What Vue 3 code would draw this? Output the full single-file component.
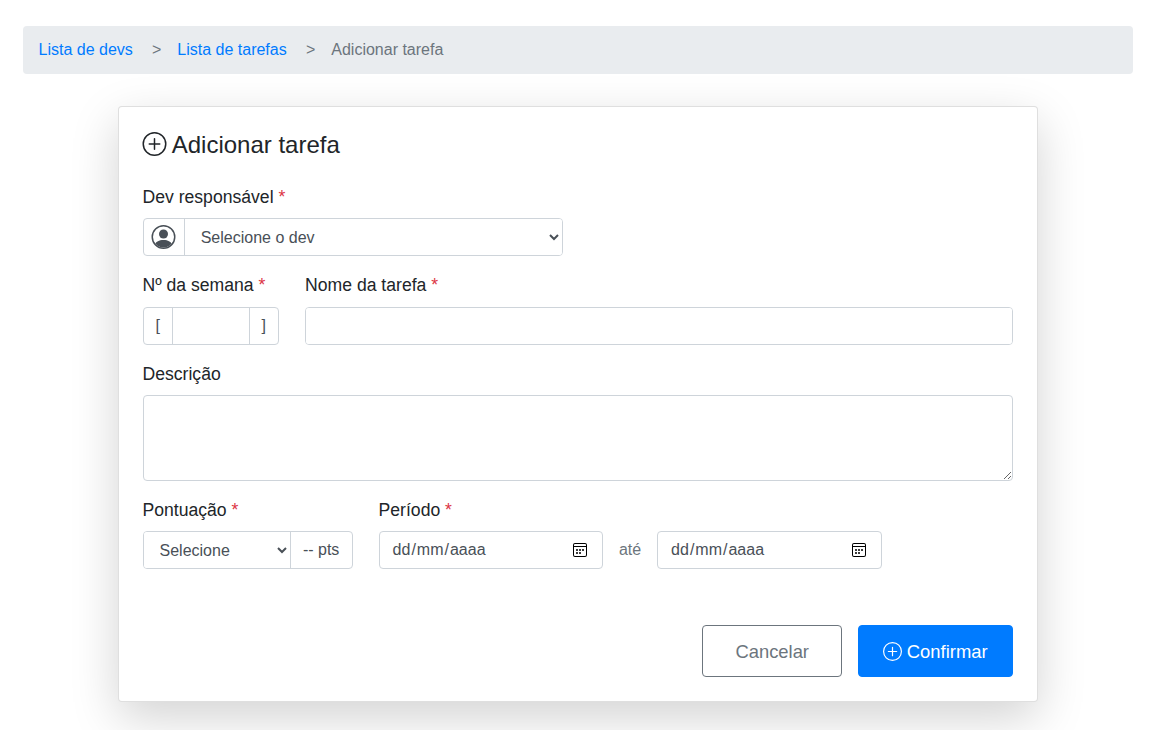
<script setup>
import { ref } from 'vue'

const dev = ref('')
const week = ref('')
const name = ref('')
const description = ref('')
const score = ref('')
const dateFields = ['start', 'end']
const plusPaths = [
  'M8 15A7 7 0 1 1 8 1a7 7 0 0 1 0 14zm0 1A8 8 0 1 0 8 0a8 8 0 0 0 0 16z',
  'M8 4a.5.5 0 0 1 .5.5v3h3a.5.5 0 0 1 0 1h-3v3a.5.5 0 0 1-1 0v-3h-3a.5.5 0 0 1 0-1h3v-3A.5.5 0 0 1 8 4z',
]
</script>

<template>
  <div class="page">
    <nav class="breadcrumb">
      <a href="#">Lista de devs</a>
      <span class="sep">&gt;</span>
      <a href="#">Lista de tarefas</a>
      <span class="sep">&gt;</span>
      <span>Adicionar tarefa</span>
    </nav>

    <main class="card">
      <h1 class="title">
        <svg viewBox="0 0 16 16" width="25" height="24" fill="currentColor">
          <path v-for="d in plusPaths" :key="d" :d="d" />
        </svg>
        <span>Adicionar tarefa</span>
      </h1>

      <div class="field dev">
        <label>Dev responsável <i>*</i></label>
        <div class="group">
          <span class="addon user">
            <svg viewBox="0 0 16 16" width="25" height="24" fill="currentColor">
              <path d="M13.468 12.37C12.758 11.226 11.195 10 8 10s-4.757 1.225-5.468 2.37A6.987 6.987 0 0 0 8 15a6.987 6.987 0 0 0 5.468-2.63z" />
              <path d="M8 9a3 3 0 1 0 0-6 3 3 0 0 0 0 6z" />
              <path fill-rule="evenodd" d="M8 1a7 7 0 1 0 0 14A7 7 0 0 0 8 1zM0 8a8 8 0 1 1 16 0A8 8 0 0 1 0 8z" />
            </svg>
          </span>
          <select v-model="dev" class="control">
            <option value="">Selecione o dev</option>
          </select>
        </div>
      </div>

      <div class="row">
        <div class="field week">
          <label>Nº da semana <i>*</i></label>
          <div class="group">
            <span class="addon">[</span>
            <input v-model="week" class="control" />
            <span class="addon">]</span>
          </div>
        </div>
        <div class="field grow">
          <label>Nome da tarefa <i>*</i></label>
          <div class="group"><input v-model="name" class="control" /></div>
        </div>
      </div>

      <div class="field">
        <label>Descrição</label>
        <textarea v-model="description" class="control"></textarea>
      </div>

      <div class="row">
        <div class="field score">
          <label>Pontuação <i>*</i></label>
          <div class="group">
            <select v-model="score" class="control">
              <option value="">Selecione</option>
            </select>
            <span class="addon pts">-- pts</span>
          </div>
        </div>
        <div class="field">
          <label>Período <i>*</i></label>
          <div class="period">
            <template v-for="(field, i) in dateFields" :key="field">
              <span v-if="i" class="until">até</span>
              <div class="group date">
                <span class="mask"><b>dd</b>/<b>mm</b>/<b>aaaa</b></span>
                <svg width="14" height="14" viewBox="0 0 14 14">
                  <path fill="#000" fill-rule="evenodd" d="M2 0h10a2 2 0 0 1 2 2v10a2 2 0 0 1-2 2H2a2 2 0 0 1-2-2V2a2 2 0 0 1 2-2zM1 4v8a1 1 0 0 0 1 1h10a1 1 0 0 0 1-1V4zM2 1a1 1 0 0 0-1 1v1h12V2a1 1 0 0 0-1-1z" />
                  <path fill="#3c3c3c" d="M3 6h2v2H3zm3 0h2v2H6zm3 0h2v2H9zM3 9h2v2H3zm3 0h2v2H6z" />
                </svg>
              </div>
            </template>
          </div>
        </div>
      </div>

      <div class="actions">
        <button class="btn cancel" type="button">Cancelar</button>
        <button class="btn confirm" type="button">
          <svg viewBox="0 0 16 16" width="19" height="19" fill="currentColor">
            <path v-for="d in plusPaths" :key="d" :d="d" />
          </svg>
          <span>Confirmar</span>
        </button>
      </div>
    </main>
  </div>
</template>

<style>
html, body { background: #fff; overflow: hidden; }
</style>

<style scoped>
.page, .page * { box-sizing: border-box; }
.page {
  height: 730px;
  overflow: hidden;
  padding: 26px 23px 0;
  font: 16px/24px "Liberation Sans", Arial, sans-serif;
  color: #212529;
}
.breadcrumb {
  display: flex;
  height: 48px;
  padding: 12px 15.5px;
  border-radius: 4px;
  background: #e9ecef;
  color: #6c757d;
}
.breadcrumb a { color: #007bff; text-decoration: none; }
.sep { margin: 0 16px 0 19.2px; }
.card {
  width: 920px;
  height: 596px;
  margin: 32px auto 0;
  padding: 24px 24px 24px 23.5px;
  border: 1px solid rgba(0, 0, 0, .125);
  border-radius: 4px;
  background: #fff;
  box-shadow: 0 16px 48px rgba(0, 0, 0, .175);
}
.title {
  display: flex;
  gap: 4.4px;
  margin: 0 0 24px;
  font-size: 24px;
  font-weight: 400;
  line-height: 28.8px;
}
.title svg { margin: 1px 0 0 -.2px; }
.field { margin-bottom: 16px; }
label {
  display: block;
  margin-bottom: 8px;
  font-size: 17.6px;
  line-height: 26.4px;
}
label i { font-style: normal; color: #dc3545; }
.row { display: flex; gap: 26.1px; }
.grow { flex: 1; }
.dev { width: 420.5px; }
.week { width: 136.5px; }
.score { width: 210px; }
.group {
  display: flex;
  height: 38px;
  border: 1px solid #ced4da;
  border-radius: 4px;
  background: #fff;
  color: #495057;
  overflow: hidden;
}
.addon {
  display: flex;
  flex: none;
  align-items: center;
  justify-content: center;
  width: 28.4px;
}
.user { width: 40.2px; justify-content: flex-start; padding-left: 7.6px; }
.pts { width: 61.8px; border-left: 1px solid #ced4da; }
.control {
  display: block;
  flex: 1;
  width: 100%;
  min-width: 0;
  margin: 0;
  padding: 6px 12px;
  border: 0;
  outline: 0;
  background: #fff;
  color: #495057;
  font: inherit;
}
select.control { padding: 6px 0 6px 12px; }
.dev select { border-left: 1px solid #ced4da; border-radius: 0; }
.week input { border: solid #ced4da; border-width: 0 1px; }
textarea.control {
  height: 86px;
  border: 1px solid #ced4da;
  border-radius: 4px;
  resize: vertical;
}
.period { display: flex; align-items: center; }
.date {
  width: 224.5px;
  align-items: center;
  justify-content: space-between;
  padding: 0 15px 0 12px;
}
.mask b { padding: 0 1px; font-weight: 400; }
.until { width: 54px; text-align: center; color: #6c757d; }
.actions {
  display: flex;
  justify-content: flex-end;
  gap: 16px;
  margin-top: 39.6px;
}
.btn {
  display: flex;
  align-items: center;
  justify-content: center;
  gap: 4.4px;
  height: 52px;
  padding: 1px 0 0;
  border: 1px solid;
  border-radius: 4px;
  font: 18.4px/28px "Liberation Sans", Arial, sans-serif;
}
.btn svg { margin-top: -1px; }
.cancel { width: 140px; padding-left: .4px; border-color: #6c757d; background: #fff; color: #6c757d; }
.confirm { width: 155px; border-color: #007bff; background: #007bff; color: #fff; }
</style>
